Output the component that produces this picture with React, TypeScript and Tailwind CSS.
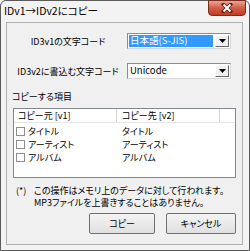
import React from 'react';

const jp = "font-['Noto_Sans_CJK_JP',sans-serif] [font-feature-settings:'palt']";

function Arrow() {
  return (
    <div className="w-[14px] h-[12px] bg-[#f0f0f0] border border-t-white border-l-white border-b-[#696969] border-r-[#696969] flex items-center justify-center">
      <svg width="7" height="4" viewBox="0 0 7 4">
        <path d="M0 0h7L3.5 4z" fill="#000" />
      </svg>
    </div>
  );
}

function Combo({ value, selected }: { value: string; selected?: boolean }) {
  return (
    <div className="w-[104px] h-[16px] bg-white border border-[#8c8c8c] border-r-[#d8d8d8] border-b-[#d8d8d8] flex items-center pl-[1px] pr-[1px]">
      <div
        className={`flex-1 h-[12px] flex items-center pl-[1px] text-[9.5px] leading-none ${
          selected ? 'bg-[#3399ff] text-white mr-[2px]' : 'text-black'
        }`}
      >
        {value}
      </div>
      <Arrow />
    </div>
  );
}

function Row({ label }: { label: string }) {
  return (
    <div className="flex h-[13px] items-center">
      <div className="w-[104px] flex items-center pl-[2px]">
        <div className="w-[9px] h-[9px] border border-[#8f8f8f] bg-white shrink-0" />
        <span className="ml-[3px] whitespace-nowrap">{label}</span>
      </div>
      <span className="pl-[4px] whitespace-nowrap">{label}</span>
    </div>
  );
}

export default function App() {
  return (
    <div className={`w-[250px] h-[251px] bg-white ${jp}`}>
      <div className="w-[250px] h-[251px] border border-[#5a5a5a] rounded-t-[6px] bg-[#f3f3f3] flex flex-col">
        <div className="h-[21px] flex justify-between pl-[3px] pr-[3px]">
          <div className="text-[10.5px] text-black pt-[5px] leading-none whitespace-nowrap">IDv1→IDv2にコピー</div>
          <div className="w-[38px] h-[16px] -mt-[1px] rounded-b-[4px] border border-[#7a2a1e] bg-gradient-to-b from-[#e8a597] via-[#d35c45] to-[#c33b22] flex items-center justify-center">
            <svg width="12" height="10" viewBox="0 0 12 10">
              <path d="M2.5 1.5l7 7M9.5 1.5l-7 7" stroke="#5a1a10" strokeWidth="3.6" strokeLinecap="square" />
              <path d="M2.5 1.5l7 7M9.5 1.5l-7 7" stroke="#fff" strokeWidth="2" />
            </svg>
          </div>
        </div>
        <div className="flex-1 ml-[5px] mr-[6px] mb-[5px] border border-[#b0b0b0] bg-[#f0f0f0] flex flex-col text-[9px] text-black leading-none">
          <div className="flex items-center mt-[10px] h-[16px]">
            <div className="w-[120px] text-center pl-[2px] whitespace-nowrap">ID3v1の文字コード</div>
            <Combo value="日本語(S-JIS)" selected />
          </div>
          <div className="flex items-center mt-[14px] h-[16px]">
            <div className="w-[120px] text-center pl-[2px] whitespace-nowrap">ID3v2に書込む文字コード</div>
            <Combo value="Unicode" />
          </div>
          <div className="mt-[11px] h-[12px] flex items-center pl-[5px]">コピーする項目</div>
          <div className="mt-[6px] ml-[6px] w-[223px] h-[70px] border border-[#828790] bg-white flex flex-col">
            <div className="flex h-[14px] border-b border-[#e5e5e5]">
              <div className="w-[103px] border-r border-[#d5d5d5] flex items-center pl-[4px]">コピー元 [v1]</div>
              <div className="w-[103px] border-r border-[#d5d5d5] flex items-center pl-[5px]">コピー先 [v2]</div>
              <div className="flex-1" />
            </div>
            <div className="flex flex-col pt-[2px]">
              <Row label="タイトル" />
              <Row label="アーティスト" />
              <Row label="アルバム" />
            </div>
          </div>
          <div className="mt-[7px] flex leading-[11.5px] pl-[9px]">
            <span className="w-[18px] shrink-0">(*)</span>
            <div className="flex flex-col whitespace-nowrap">
              <span>この操作はメモリ上のデータに対して行われます。</span>
              <span>MP3ファイルを上書きすることはありません。</span>
            </div>
          </div>
          <div className="mt-[5px] flex gap-[11px] pl-[82px]">
            <button className="w-[66px] h-[21px] border border-[#707070] rounded-[2px] bg-gradient-to-b from-[#f4f4f4] to-[#e0e0e0] text-[9px]">コピー</button>
            <button className="w-[70px] h-[21px] border border-[#707070] rounded-[2px] bg-gradient-to-b from-[#f4f4f4] to-[#e0e0e0] text-[9px]">キャンセル</button>
          </div>
        </div>
      </div>
    </div>
  );
}
